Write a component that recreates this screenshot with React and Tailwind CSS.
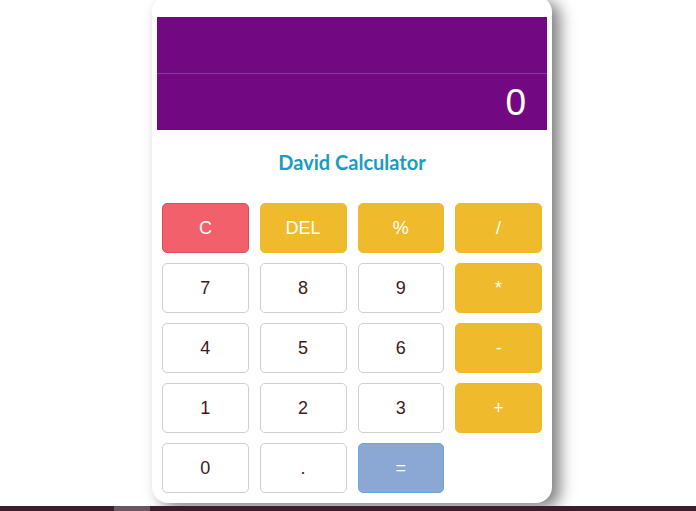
import React, { useState } from 'react';

const keys = [
  { label: 'C', kind: 'clear' },
  { label: 'DEL', kind: 'op' },
  { label: '%', kind: 'op' },
  { label: '/', kind: 'op' },
  { label: '7', kind: 'num' },
  { label: '8', kind: 'num' },
  { label: '9', kind: 'num' },
  { label: '*', kind: 'op' },
  { label: '4', kind: 'num' },
  { label: '5', kind: 'num' },
  { label: '6', kind: 'num' },
  { label: '-', kind: 'op' },
  { label: '1', kind: 'num' },
  { label: '2', kind: 'num' },
  { label: '3', kind: 'num' },
  { label: '+', kind: 'op' },
  { label: '0', kind: 'num' },
  { label: '.', kind: 'num' },
  { label: '=', kind: 'eq' },
];

const styles = {
  clear: 'bg-[#f2606b] border-[#d9505a] text-white',
  op: 'bg-[#efba2b] border-[#efba2b] text-white',
  num: 'bg-white border-[#cfcfcf] text-[#3a1c1c]',
  eq: 'bg-[#8aa8d3] border-[#62a9dc] text-white',
};

const App = () => {
  const [expr, setExpr] = useState('');
  const [result, setResult] = useState('0');

  const press = (k) => {
    if (k === 'C') { setExpr(''); setResult('0'); return; }
    if (k === 'DEL') { setExpr(e => e.slice(0, -1)); return; }
    if (k === '=') {
      try {
        // eslint-disable-next-line no-new-func
        setResult(String(Function(`return (${expr.replace(/%/g, '/100')})`)()));
      } catch {
        setResult('Error');
      }
      return;
    }
    setExpr(e => e + k);
  };

  return (
    <div className="h-[511px] w-full bg-white flex flex-col overflow-hidden font-['Liberation_Sans',Arial,sans-serif]">
      <div className="flex-1 flex justify-center pl-[8px]">
        <div className="w-[400px] h-[507px] -mt-[4px] bg-white rounded-[16px] shadow-[8px_5px_15px_rgba(0,0,0,0.5)] pt-[21px] px-[5px] flex flex-col">
          <div className="bg-[#730883]">
            <div className="h-[57px] border-b border-[#8a3a97] flex items-center justify-end px-[22px] text-white/80 text-xl">
              {expr}
            </div>
            <div className="h-[56px] flex items-center justify-end pr-[21px] text-white text-[37px] leading-none">
              {result}
            </div>
          </div>
          <h1 className="h-[64px] mb-[9px] flex items-center justify-center text-[#1b9bc2] font-bold text-[20px] font-['Lato','Open_Sans',sans-serif]">
            David Calculator
          </h1>
          <div className="grid grid-cols-4 gap-x-[11px] gap-y-[10px] px-[5px]">
            {keys.map(k => (
              <button
                key={k.label}
                onClick={() => press(k.label)}
                className={`h-[50px] rounded-[5px] border text-[18px] ${styles[k.kind]}`}
              >
                {k.label}
              </button>
            ))}
          </div>
        </div>
      </div>
      <div className="h-[5px] flex bg-[#3b1d2b]">
        <div className="w-[114px]" />
        <div className="w-[36px] bg-[#6b5560]" />
      </div>
    </div>
  );
};

export default App;
